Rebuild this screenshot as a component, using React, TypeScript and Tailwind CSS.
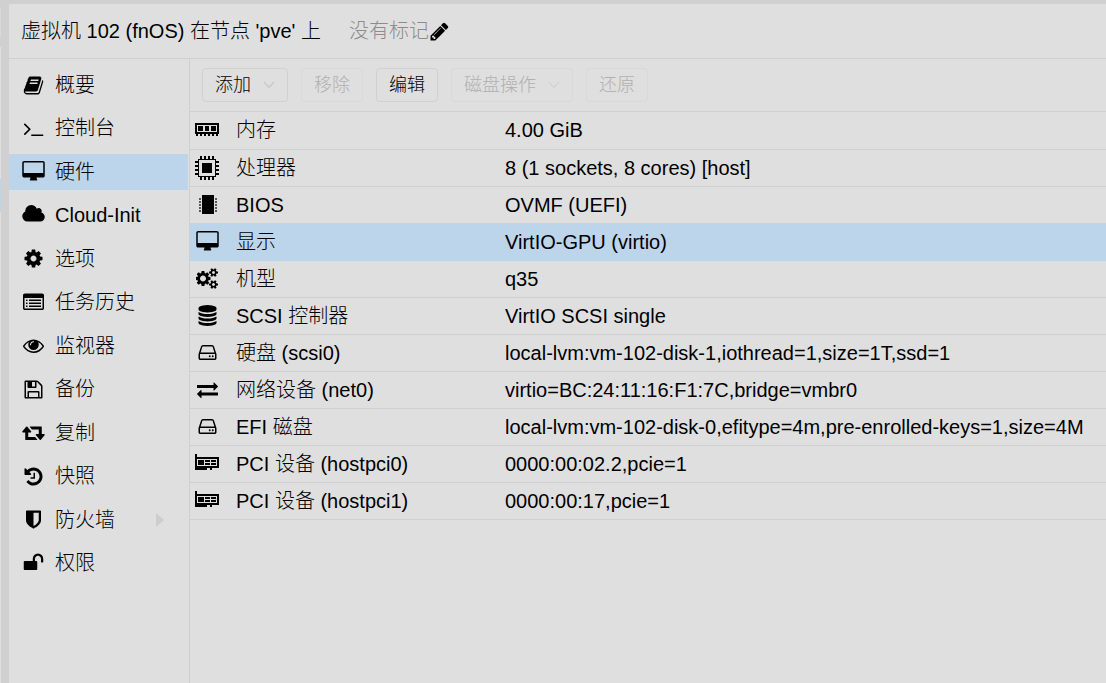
import type { ReactNode } from "react";

function Fa({ d, vb = "0 0 1792 1792", w = "w-[21px]" }: { d: string; vb?: string; w?: string }) {
  return (
    <svg viewBox={vb} className={`h-[21px] shrink-0 ${w}`} fill="currentColor" aria-hidden="true">
      <path d={d} />
    </svg>
  );
}

const P = {
  book: "M1703 478q40 57 18 129l-275 906q-19 64-76.5 107.5t-122.5 43.5h-923q-77 0-148.5-53.5t-99.5-131.5q-24-67-2-127 0-4 3-27t4-37q1-8-3-21.5t-3-19.5q2-11 8-21t16.5-23.5 16.5-23.5q23-38 45-91.5t30-91.5q3-10 .5-30t-.5-28q3-11 17-28t17-23q21-36 42-92t25-90q1-9-2.5-32t.5-28q4-13 22-30.5t22-22.5q19-26 42.5-84.5t27.5-96.5q1-8-3-25.5t-2-26.5q2-8 9-18t18-23 17-21q8-12 16.5-30.5t15-35 16-36 19.5-32 26.5-23.5 36-11.5 47.5 5.5l-1 3q38-9 51-9h761q74 0 114 56t18 130l-274 906q-36 119-71.5 153.5t-128.5 34.5h-869q-27 0-38 15-11 16-1 43 24 70 144 70h923q29 0 56-15.5t35-41.5l300-987q7-22 5-57 38 15 59 43zm-1064 2q-4 13 2 22.5t20 9.5h608q13 0 25.5-9.5t16.5-22.5l21-64q4-13-2-22.5t-20-9.5h-608q-13 0-25.5 9.5t-16.5 22.5zm-83 256q-4 13 2 22.5t20 9.5h608q13 0 25.5-9.5t16.5-22.5l21-64q4-13-2-22.5t-20-9.5h-608q-13 0-25.5 9.5t-16.5 22.5z",
  terminal: "M649 983l-466 466q-10 10-23 10t-23-10l-50-50q-10-10-10-23t10-23l393-393-393-393q-10-10-10-23t10-23l50-50q10-10 23-10t23 10l466 466q10 10 10 23t-10 23zm1079 457v64q0 14-9 23t-23 9h-960q-14 0-23-9t-9-23v-64q0-14 9-23t23-9h960q14 0 23 9t9 23z",
  desktop: "M1728 992v-832q0-13-9.5-22.5t-22.5-9.5h-1600q-13 0-22.5 9.5t-9.5 22.5v832q0 13 9.5 22.5t22.5 9.5h1600q13 0 22.5-9.5t9.5-22.5zm128-832v1088q0 66-47 113t-113 47h-544q0 37 16 77.5t32 71 16 43.5q0 26-19 45t-45 19h-512q-26 0-45-19t-19-45q0-14 16-44t32-70 16-78h-544q-66 0-113-47t-47-113v-1088q0-66 47-113t113-47h1600q66 0 113 47t47 113z",
  cloud: "M1984 1152q0 159-112.5 271.5t-271.5 112.5h-1088q-185 0-316.5-131.5t-131.5-316.5q0-132 71-241.5t187-163.5q-2-28-2-43 0-212 150-362t362-150q158 0 286.5 88t187.5 230q70-62 166-62 106 0 181 75t75 181q0 75-41 138 129 30 213 134.5t84 239.5z",
  cog: "M1152 896q0-106-75-181t-181-75-181 75-75 181 75 181 181 75 181-75 75-181zm512-109v222q0 12-8 23t-20 13l-185 28q-19 54-39 91 35 50 107 138 10 12 10 25t-9 23q-27 37-99 108t-94 71q-12 0-26-9l-138-108q-44 23-91 38-16 136-29 186-7 28-36 28h-222q-14 0-24.5-8.5t-11.5-21.5l-28-184q-49-16-90-37l-141 107q-10 9-25 9-14 0-25-11-126-114-165-168-7-10-7-23 0-12 8-23 15-21 51-66.5t54-70.5q-27-50-41-99l-183-27q-13-2-21-12.5t-8-23.5v-222q0-12 8-23t19-13l186-28q14-46 39-92-40-57-107-138-10-12-10-24 0-10 9-23 26-36 98.5-107.5t94.5-71.5q13 0 26 10l138 107q44-23 91-38 16-136 29-186 7-28 36-28h222q14 0 24.5 8.5t11.5 21.5l28 184q49 16 90 37l142-107q9-9 24-9 13 0 25 10 129 119 165 170 7 8 7 22 0 12-8 23-15 21-51 66.5t-54 70.5q26 50 41 98l183 28q13 2 21 12.5t8 23.5z",
  list: "M384 1184v64q0 13-9.5 22.5t-22.5 9.5h-64q-13 0-22.5-9.5t-9.5-22.5v-64q0-13 9.5-22.5t22.5-9.5h64q13 0 22.5 9.5t9.5 22.5zm0-256v64q0 13-9.5 22.5t-22.5 9.5h-64q-13 0-22.5-9.5t-9.5-22.5v-64q0-13 9.5-22.5t22.5-9.5h64q13 0 22.5 9.5t9.5 22.5zm0-256v64q0 13-9.5 22.5t-22.5 9.5h-64q-13 0-22.5-9.5t-9.5-22.5v-64q0-13 9.5-22.5t22.5-9.5h64q13 0 22.5 9.5t9.5 22.5zm1152 512v64q0 13-9.5 22.5t-22.5 9.5h-960q-13 0-22.5-9.5t-9.5-22.5v-64q0-13 9.5-22.5t22.5-9.5h960q13 0 22.5 9.5t9.5 22.5zm0-256v64q0 13-9.5 22.5t-22.5 9.5h-960q-13 0-22.5-9.5t-9.5-22.5v-64q0-13 9.5-22.5t22.5-9.5h960q13 0 22.5 9.5t9.5 22.5zm0-256v64q0 13-9.5 22.5t-22.5 9.5h-960q-13 0-22.5-9.5t-9.5-22.5v-64q0-13 9.5-22.5t22.5-9.5h960q13 0 22.5 9.5t9.5 22.5zm128 704v-832q0-13-9.5-22.5t-22.5-9.5h-1472q-13 0-22.5 9.5t-9.5 22.5v832q0 13 9.5 22.5t22.5 9.5h1472q13 0 22.5-9.5t9.5-22.5zm128-1088v1088q0 66-47 113t-113 47h-1472q-66 0-113-47t-47-113v-1088q0-66 47-113t113-47h1472q66 0 113 47t47 113z",
  eye: "M1664 960q-152-236-381-353 61 104 61 225 0 185-131.5 316.5t-316.5 131.5-316.5-131.5-131.5-316.5q0-121 61-225-229 117-381 353 133 205 333.5 326.5t434.5 121.5 434.5-121.5 333.5-326.5zm-720-384q0-20-14-34t-34-14q-125 0-214.5 89.5t-89.5 214.5q0 20 14 34t34 14 34-14 14-34q0-86 61-147t147-61q20 0 34-14t14-34zm848 384q0 34-20 69-140 230-376.5 368.5t-499.5 138.5-499.5-139-376.5-368q-20-35-20-69t20-69q140-229 376.5-368t499.5-139 499.5 139 376.5 368q20 35 20 69z",
  floppy: "M512 1536h768v-384h-768v384zm896 0h128v-896q0-14-10-38.5t-20-34.5l-281-281q-10-10-34-20t-39-10v416q0 40-28 68t-68 28h-576q-40 0-68-28t-28-68v-416h-128v1280h128v-416q0-40 28-68t68-28h832q40 0 68 28t28 68v416zm-384-928v-320q0-13-9.5-22.5t-22.5-9.5h-192q-13 0-22.5 9.5t-9.5 22.5v320q0 13 9.5 22.5t22.5 9.5h192q13 0 22.5-9.5t9.5-22.5zm640 32v928q0 40-28 68t-68 28h-1344q-40 0-68-28t-28-68v-1344q0-40 28-68t68-28h928q40 0 88 20t76 48l280 280q28 28 48 76t20 88z",
  retweet: "M1280 1504q0 13-9.5 22.5t-22.5 9.5h-960q-8 0-13.5-2t-9-7-5.5-8-3-11.5-1-11.5v-600h-192q-26 0-45-19t-19-45q0-24 15-41l320-384q19-22 49-22t49 22l320 384q15 17 15 41 0 26-19 45t-45 19h-192v384h576q16 0 25 11l160 192q7 10 7 21zm640-416q0 24-15 41l-320 384q-20 23-49 23t-49-23l-320-384q-15-17-15-41 0-26 19-45t45-19h192v-384h-576q-16 0-25-12l-160-192q-7-9-7-20 0-13 9.5-22.5t22.5-9.5h960q8 0 13.5 2t9 7 5.5 8 3 11.5 1 11.5v600h192q26 0 45 19t19 45z",
  history: "M1664 896q0 156-61 298t-164 245-245 164-298 61q-172 0-327-72.5t-264-204.5q-7-10-6.5-22.5t8.5-20.5l137-138q10-9 25-9 16 2 23 12 73 95 179 147t225 52q104 0 198.5-40.5t163.5-109.5 109.5-163.5 40.5-198.5-40.5-198.5-109.5-163.5-163.5-109.5-198.5-40.5q-98 0-188 35.5t-160 101.5l137 138q31 30 14 69-17 40-59 40h-448q-26 0-45-19t-19-45v-448q0-42 40-59 39-17 69 14l130 129q107-101 244.5-156.5t284.5-55.5q156 0 298 61t245 164 164 245 61 298zm-640-288v448q0 14-9 23t-23 9h-320q-14 0-23-9t-9-23v-64q0-14 9-23t23-9h224v-352q0-14 9-23t23-9h64q14 0 23 9t9 23z",
  shield: "M1344 960v-640h-448v1137q119-63 213-137 235-184 235-360zm192-768v768q0 86-33.5 170.5t-83 150-118 127.5-126.5 103-121 77.5-89.5 49.5-42.5 20q-12 6-26 6t-26-6q-16-7-42.5-20t-89.5-49.5-121-77.5-126.5-103-118-127.5-83-150-33.5-170.5v-768q0-26 19-45t45-19h1152q26 0 45 19t19 45z",
  unlock: "M1728 576v256q0 26-19 45t-45 19h-64q-26 0-45-19t-19-45v-256q0-106-75-181t-181-75-181 75-75 181v192h96q40 0 68 28t28 68v576q0 40-28 68t-68 28h-960q-40 0-68-28t-28-68v-576q0-40 28-68t68-28h672v-192q0-185 131.5-316.5t316.5-131.5 316.5 131.5 131.5 316.5z",
  pencil: "M491 1536l91-91-235-235-91 91v107h128v128h107zm523-928q0-22-22-22-10 0-17 7l-542 542q-7 7-7 17 0 22 22 22 10 0 17-7l542-542q7-7 7-17zm-54-192l416 416-832 832h-416v-416zm683 96q0 53-37 90l-166 166-416-416 166-165q36-38 90-38 53 0 91 38l235 234q37 39 37 91z",
  cogs: "M832 896q0-106-75-181t-181-75-181 75-75 181 75 181 181 75 181-75 75-181zm768 512q0-52-38-90t-90-38-90 38-38 90q0 53 37.5 90.5t90.5 37.5 90.5-37.5 37.5-90.5zm0-1024q0-52-38-90t-90-38-90 38-38 90q0 53 37.5 90.5t90.5 37.5 90.5-37.5 37.5-90.5zm-384 421v185q0 10-7 19.5t-16 10.5l-155 24q-11 35-32 76 34 48 90 115 7 11 7 20 0 12-7 19-23 30-82.5 89.5t-78.5 59.5q-11 0-21-7l-115-90q-37 19-77 31-11 108-23 155-7 24-30 24h-186q-11 0-20-7.5t-10-17.5l-23-153q-34-10-75-31l-118 89q-7 7-20 7-11 0-21-8-144-133-144-160 0-9 7-19 10-14 41-53t47-61q-23-44-35-82l-152-24q-10-1-17-9.5t-7-19.5v-185q0-10 7-19.5t16-10.5l155-24q11-35 32-76-34-48-90-115-7-11-7-20 0-12 7-20 22-30 82-89t79-59q11 0 21 7l115 90q34-18 77-32 11-108 23-154 7-24 30-24h186q11 0 20 7.5t10 17.5l23 153q34 10 75 31l118-89q8-7 20-7 11 0 21 8 144 133 144 160 0 8-7 19-12 16-42 54t-45 60q23 48 34 82l152 23q10 2 17 10.5t7 19.5zm640 533v140q0 16-149 31-12 27-30 52 51 113 51 138 0 4-4 7-122 71-124 71-8 0-46-47t-52-68q-20 2-30 2t-30-2q-14 21-52 68t-46 47q-2 0-124-71-4-3-4-7 0-25 51-138-18-25-30-52-149-15-149-31v-140q0-16 149-31 13-29 30-52-51-113-51-138 0-4 4-7 4-2 35-20t59-34 30-16q8 0 46 46.5t52 67.5q20-2 30-2t30 2q51-71 92-112l6-2q4 0 124 70 4 3 4 7 0 25-51 138 17 23 30 52 149 15 149 31zm0-1024v140q0 16-149 31-12 27-30 52 51 113 51 138 0 4-4 7-122 71-124 71-8 0-46-47t-52-68q-20 2-30 2t-30-2q-14 21-52 68t-46 47q-2 0-124-71-4-3-4-7 0-25 51-138-18-25-30-52-149-15-149-31v-140q0-16 149-31 13-29 30-52-51-113-51-138 0-4 4-7 4-2 35-20t59-34 30-16q8 0 46 46.5t52 67.5q20-2 30-2t30 2q51-71 92-112l6-2q4 0 124 70 4 3 4 7 0 25-51 138 17 23 30 52 149 15 149 31z",
  database: "M896 768q237 0 443-43t325-127v170q0 69-103 128t-280 93.5-385 34.5-385-34.5-280-93.5-103-128v-170q119 84 325 127t443 43zm0 768q237 0 443-43t325-127v170q0 69-103 128t-280 93.5-385 34.5-385-34.5-280-93.5-103-128v-170q119 84 325 127t443 43zm0-384q237 0 443-43t325-127v170q0 69-103 128t-280 93.5-385 34.5-385-34.5-280-93.5-103-128v-170q119 84 325 127t443 43zm0-1152q208 0 385 34.5t280 93.5 103 128v128q0 69-103 128t-280 93.5-385 34.5-385-34.5-280-93.5-103-128v-128q0-69 103-128t280-93.5 385-34.5z",
  hdd: "M1168 1216q0 33-23.5 56.5t-56.5 23.5-56.5-23.5-23.5-56.5 23.5-56.5 56.5-23.5 56.5 23.5 23.5 56.5zm256 0q0 33-23.5 56.5t-56.5 23.5-56.5-23.5-23.5-56.5 23.5-56.5 56.5-23.5 56.5 23.5 23.5 56.5zm112 160v-320q0-13-9.5-22.5t-22.5-9.5h-1216q-13 0-22.5 9.5t-9.5 22.5v320q0 13 9.5 22.5t22.5 9.5h1216q13 0 22.5-9.5t9.5-22.5zm-1230-480h1180l-157-482q-4-13-16-21.5t-26-8.5h-782q-14 0-26 8.5t-16 21.5zm1358 160v320q0 66-47 113t-113 47h-1216q-66 0-113-47t-47-113v-320q0-25 16-75l197-606q17-53 63-86t101-33h782q55 0 101 33t63 86l197 606q16 50 16 75z",
  exchange: "M1792 1184v192q0 13-9.5 22.5t-22.5 9.5h-1376v192q0 13-9.5 22.5t-22.5 9.5q-12 0-24-10l-319-320q-9-9-9-22 0-14 9-23l320-320q9-9 23-9 13 0 22.5 9.5t9.5 22.5v192h1376q13 0 22.5 9.5t9.5 22.5zm0-544q0 14-9 23l-320 320q-9 9-23 9-13 0-22.5-9.5t-9.5-22.5v-192h-1376q-13 0-22.5-9.5t-9.5-22.5v-192q0-13 9.5-22.5t22.5-9.5h1376v-192q0-14 9-23t23-9q12 0 24 10l319 319q9 9 9 23z",
};

const desktopIcon = <Fa d={P.desktop} vb="-64 0 1920 1792" w="w-[23px]" />;

function Px({ children }: { children: ReactNode }) {
  return (
    <svg viewBox="0 0 24 24" className="size-6 shrink-0" fill="currentColor" shapeRendering="crispEdges" aria-hidden="true">
      {children}
    </svg>
  );
}

const MemoryIcon = () => (
  <Px>
    <path fillRule="evenodd" d="M0 5h24v11H0zM2 7v7h20V7z" />
    <path d="M3 8h5v5H3zM10 8h4v5h-4zM16 8h5v5h-5zM1 16h2v2H1zM5 16h2v2H5zM9 16h2v2H9zM13 16h2v2h-2zM17 16h2v2h-2zM21 16h2v2h-2z" />
  </Px>
);

const CpuIcon = () => (
  <Px>
    <path fillRule="evenodd" d="M3 3h18v18H3zM4 4v16h16V4z" />
    <path d="M7 7h10v10H7z" />
    {[5, 9, 13, 17].map((p) => (
      <path key={p} d={`M${p} 0h2v3h-2zM${p} 21h2v3h-2zM0 ${p}h3v2H0zM21 ${p}h3v2h-3z`} />
    ))}
  </Px>
);

const ChipIcon = () => (
  <Px>
    <rect x="7" y="2" width="12" height="19" />
    <g opacity="0.6">
      {[5, 8, 11, 14, 17].map((y) => (
        <path key={y} d={`M4 ${y}h2v2H4zM20 ${y}h2v2h-2z`} />
      ))}
    </g>
  </Px>
);

const PciIcon = () => (
  <Px>
    <path d="M0 2h2v16H0z" />
    <path fillRule="evenodd" d="M2 5h22v11H2zM2 7v7h20V7z" />
    <path d="M3 8h6v5H3zM10 8h5v2h-5zM16 8h5v2h-5zM10 11h5v2h-5zM16 11h5v2h-5zM2 16h10v2H2zM15 16h2v2h-2z" />
  </Px>
);

const nav: { label: string; icon: ReactNode; selected?: boolean; sub?: boolean }[] = [
  { label: "概要", icon: <Fa d={P.book} /> },
  { label: "控制台", icon: <Fa d={P.terminal} /> },
  { label: "硬件", icon: desktopIcon, selected: true },
  { label: "Cloud-Init", icon: <Fa d={P.cloud} vb="64 128 1920 1792" w="w-[23px]" /> },
  { label: "选项", icon: <Fa d={P.cog} /> },
  { label: "任务历史", icon: <Fa d={P.list} /> },
  { label: "监视器", icon: <Fa d={P.eye} /> },
  { label: "备份", icon: <Fa d={P.floppy} /> },
  { label: "复制", icon: <Fa d={P.retweet} vb="0 0 1920 1792" w="w-[23px]" /> },
  { label: "快照", icon: <Fa d={P.history} /> },
  { label: "防火墙", icon: <Fa d={P.shield} />, sub: true },
  { label: "权限", icon: <Fa d={P.unlock} /> },
];

const rows: { label: string; value: string; icon: ReactNode; selected?: boolean }[] = [
  { label: "内存", value: "4.00 GiB", icon: <MemoryIcon /> },
  { label: "处理器", value: "8 (1 sockets, 8 cores) [host]", icon: <CpuIcon /> },
  { label: "BIOS", value: "OVMF (UEFI)", icon: <ChipIcon /> },
  { label: "显示", value: "VirtIO-GPU (virtio)", icon: desktopIcon, selected: true },
  { label: "机型", value: "q35", icon: <Fa d={P.cogs} vb="0 0 1920 1792" w="w-[23px]" /> },
  { label: "SCSI 控制器", value: "VirtIO SCSI single", icon: <Fa d={P.database} /> },
  { label: "硬盘 (scsi0)", value: "local-lvm:vm-102-disk-1,iothread=1,size=1T,ssd=1", icon: <Fa d={P.hdd} /> },
  { label: "网络设备 (net0)", value: "virtio=BC:24:11:16:F1:7C,bridge=vmbr0", icon: <Fa d={P.exchange} /> },
  { label: "EFI 磁盘", value: "local-lvm:vm-102-disk-0,efitype=4m,pre-enrolled-keys=1,size=4M", icon: <Fa d={P.hdd} /> },
  { label: "PCI 设备 (hostpci0)", value: "0000:00:02.2,pcie=1", icon: <PciIcon /> },
  { label: "PCI 设备 (hostpci1)", value: "0000:00:17,pcie=1", icon: <PciIcon /> },
];

function ToolButton({ label, menu, disabled }: { label: string; menu?: boolean; disabled?: boolean }) {
  return (
    <button
      type="button"
      disabled={disabled}
      className="flex h-[34px] items-center gap-3 rounded-[4px] border border-[#d1d1d1] px-3 text-[18px] leading-6 disabled:border-[#d9d9d9] disabled:text-[#b0b0b0]"
    >
      {label}
      {menu && (
        <svg viewBox="0 0 12 8" className="h-2 w-3" fill="none" stroke={disabled ? "#d5d5d5" : "#cacaca"} strokeWidth="1.5" aria-hidden="true">
          <path d="M1 1l5 5.5L11 1" />
        </svg>
      )}
    </button>
  );
}

export default function App() {
  return (
    <div className="flex min-h-screen bg-[#d0d0d0] pt-1 font-['Liberation_Sans','Noto_Sans_CJK_SC',sans-serif] text-[20px] leading-6 font-light text-black">
      <div className="flex w-[9px] shrink-0 flex-col pt-[3px]" aria-hidden="true">
        <div className="h-[30px] w-px bg-[#dadada]" />
        <div className="mt-[10px] h-[132px] w-px bg-[#dfdfdf]" />
        <div className="h-[33px] w-px bg-[#bdd5ea]" />
        <div className="w-px flex-1 bg-[#dfdfdf]" />
      </div>
      <div className="flex min-w-0 flex-1 flex-col bg-[#dfdfdf]">
        <header className="flex h-[55px] items-center border-b border-[#cfcfcf] pl-3">
          <h1>虚拟机 102 (fnOS) 在节点 'pve' 上</h1>
          <span className="ml-7 text-[#8c8c8c]">没有标记</span>
          <button type="button" aria-label="编辑标记">
            <Fa d={P.pencil} />
          </button>
        </header>
        <div className="flex flex-1">
          <nav className="w-[181px] shrink-0 border-r border-[#cfcfcf] pt-2">
            <ul className="flex h-[514px] flex-col justify-between">
              {nav.map((n) => (
                <li key={n.label}>
                  <a
                    href="#"
                    className={`mr-px flex h-9 items-center gap-[10px] pr-6 pl-3 ${n.selected ? "bg-[#bdd5ea]" : ""}`}
                  >
                    <span className="flex w-6 justify-center">{n.icon}</span>
                    <span className="flex-1">{n.label}</span>
                    {n.sub && (
                      <svg viewBox="0 0 8 14" className="h-[14px] w-2" fill="#cdcdcd" aria-hidden="true">
                        <path d="M0 0l8 7-8 7z" />
                      </svg>
                    )}
                  </a>
                </li>
              ))}
            </ul>
          </nav>
          <main className="min-w-0 flex-1">
            <div className="flex h-[53px] items-center gap-[13px] border-b border-[#cfcfcf] px-3">
              <ToolButton label="添加" menu />
              <ToolButton label="移除" disabled />
              <ToolButton label="编辑" />
              <ToolButton label="磁盘操作" menu disabled />
              <ToolButton label="还原" disabled />
            </div>
            <table className="w-full table-fixed border-collapse text-left">
              <colgroup>
                <col className="w-[307px]" />
                <col />
              </colgroup>
              <tbody>
                {rows.map((r) => (
                  <tr key={r.label} className={`h-[37px] border-b ${r.selected ? "border-[#bdd5ea] bg-[#bdd5ea]" : "border-[#cfcfcf]"}`}>
                    <th scope="row" className="p-0 pl-[5px] font-light">
                      <div className="flex items-center gap-[17px]">
                        <span className="flex w-6 justify-center">{r.icon}</span>
                        {r.label}
                      </div>
                    </th>
                    <td className="p-0 pl-2 whitespace-nowrap">{r.value}</td>
                  </tr>
                ))}
              </tbody>
            </table>
          </main>
        </div>
      </div>
    </div>
  );
}
